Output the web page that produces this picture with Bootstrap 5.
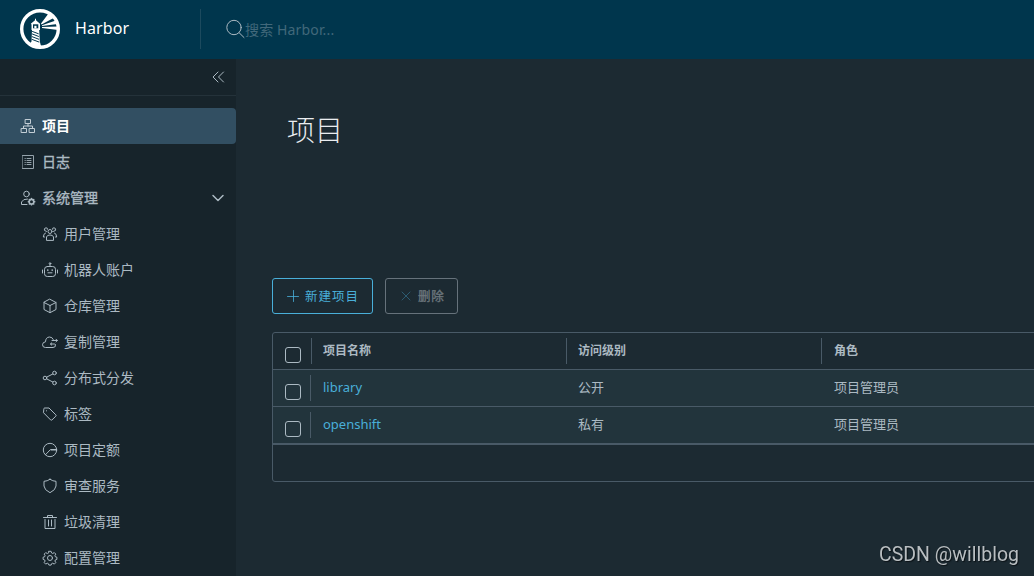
<!DOCTYPE html>
<html lang="zh-CN" data-bs-theme="dark">
<head>
<meta charset="utf-8">
<meta name="viewport" content="width=device-width, initial-scale=1">
<title>Harbor</title>
<link href="https://cdn.jsdelivr.net/npm/bootstrap@5.3.0/dist/css/bootstrap.min.css" rel="stylesheet">
<style>
  body { font-family: "Noto Sans", "Noto Sans CJK SC", sans-serif; font-size: 14px; line-height: 24px; background: #1c2a32; color: #acbac3; height: 100vh; overflow: hidden; }
  svg { display: block; flex: none; fill: none; stroke: currentColor; stroke-width: 1; stroke-linecap: round; stroke-linejoin: round; }
  .topbar { height: 59px; background: #00364d; padding: 0 0 2px 20px; }
  .brand-name { font-size: 16px; letter-spacing: .1px; color: #fff; margin: -2px 0 0 15px; width: 125px; }
  .search-box { height: 40px; border-left: 1px solid #1c4a5e; padding-left: 25px; color: #acbac3; }
  .search-box input { background: none; border: 0; outline: 0; padding: 0; width: 180px; font-size: 14px; letter-spacing: .15px; height: 24px; margin-top: 2px; }
  .search-box input::placeholder { color: #41687a; opacity: 1; }
  .side { width: 236px; background: #17242b; }
  .collapse-bar { height: 37px; border-bottom: 1px solid #24323a; padding-right: 11px; margin-bottom: 12px; }
  .side .nav-link { height: 36px; padding: 0 10px 0 20px; color: #acbac3; gap: 6px; border-radius: 0 4px 4px 0; font-size: 14px; white-space: nowrap; }
  .side .top-item { -webkit-text-stroke: .35px currentColor; }
  .side .nav-link.active { background: #324f62; color: #fff; font-weight: 700; -webkit-text-stroke: 0; }
  .side .active svg { color: #c3ced5; }
  .side .sub-item { padding-left: 42px; }
  .content-area { padding: 0 0 0 36px; min-width: 0; overflow: hidden; }
  .page-title { font-size: 28px; line-height: 36px; font-weight: 300; color: #eaedf0; margin: 53px 0 0 15px; }
  .action-row { margin-top: 130px; gap: 12px; }
  .action { height: 36px; padding: 0 12px 0 14px; border-radius: 3px; font-size: 12.5px; letter-spacing: 1px; line-height: 34px; display: flex; align-items: center; gap: 6px; white-space: nowrap; }
  .action span { padding-top: 2px; }
  .action-new, .action-new:hover { color: #49afd9; border-color: #49afd9; width: 101px; }
  .action-del:disabled { color: #6c767d; border-color: #66727b; opacity: 1; width: 73px; -webkit-text-stroke: .35px currentColor; letter-spacing: .8px; }
  .grid-box { width: 1100px; margin-top: 18px; border: 1px solid #495a67; border-radius: 3px; font-size: 13px; }
  .grid-line { height: 37px; border-bottom: 1px solid #495a67; }
  .grid-line > div { width: 255px; padding-left: 12px; line-height: 34px; }
  .grid-line > .pick { width: 38px; padding: 7px 0 0 12px; }
  .grid-line > div:last-child { padding-left: 13px; }
  .grid-line.head-line { font-size: 12px; font-weight: 700; }
  .grid-line.head-line > .ruled { line-height: 36px; }
  .ruled { background: linear-gradient(#495a67, #495a67) 0 5px / 1px 26px no-repeat; }
  .body-line { background-color: #22343c; }
  .grid-line.body-line > .ruled { margin-left: -1px; padding-left: 13px; width: 256px; }
  .body-line.last-line { border-bottom-width: 2px; height: 38px; }
  .grid-line a { color: #49afd9; text-decoration: none; }
  .form-check-input.pick-box { width: 16px; height: 16px; margin: 7px 0 0; display: block; float: none; background: none; border: 1px solid #acbac3; border-radius: 3px; }
  .grid-foot { height: 36px; }
  .watermark { position: fixed; right: 15px; bottom: 9px; font: 19.5px/24px Roboto, sans-serif; color: #b9bec1; text-shadow: 1px 1px 1px #0b1216; }
</style>
</head>
<body class="d-flex flex-column">
<header class="topbar d-flex align-items-center flex-shrink-0">
  <svg width="40" height="40" viewBox="0 0 40 40" stroke="none">
    <circle cx="20" cy="20" r="18.3" stroke="#fff" stroke-width="3.4"/>
    <path fill="#fff" stroke="none" d="M10.800 14.800L15 11.200V9.800H16V11.200L20 14.800V21H19.200L19.800 32.500Q20.500 36 22 39Q14 39 9.500 35L11.500 32.500L12 21H11.500V15.500Z"/>
    <path fill="#00364d" stroke="none" d="M13 15.300h5.300v4h-5.300z"/><path fill="#fff" stroke="none" d="M14.300 16.800h2.200v2.500h-2.200z"/>
    <path stroke="#00364d" stroke-width="1" d="M12.500 22.500l5.800 2.200M12.300 25l6.200 2.400M12.200 27.700l6.500 2.500M12 30.400l6.900 2.600"/>
    <path fill="#fff" stroke="none" d="M21 14.400L28.500 4.500L34.500 8.500L21.500 15.500ZM22 16.300L36.500 11.300L37.500 15L22 17.100ZM22 18L38 17.600V21L22 19Z"/>
  </svg>
  <div class="brand-name">Harbor</div>
  <div class="search-box d-flex align-items-center">
    <svg width="19" height="20" viewBox="0 0 19 20" stroke-width="1.2"><circle cx="8" cy="8.500" r="7.2"/><path d="M13.200 13.800L18 18.500"/></svg>
    <input type="text" placeholder="搜索 Harbor..." aria-label="搜索">
  </div>
</header>
<div class="d-flex flex-grow-1 overflow-hidden">
  <nav class="side flex-shrink-0">
    <div class="collapse-bar d-flex justify-content-end align-items-center">
      <svg width="14" height="12" viewBox="0 0 14 12"><path d="M7 1L2 6L7 11M12.500 1L7.500 6L12.500 11"/></svg>
    </div>
    <div class="nav flex-column flex-nowrap">
      <a class="nav-link top-item active d-flex align-items-center" href="#"><svg width="16" height="16" viewBox="0 0 16 16"><path d="M5.5 1.5h5v4h-5zM1.500 10.500h5v4h-5zM9.500 10.500h5v4h-5zM8 5.500v2.500M3.500 10.500V8h9v2.500"/></svg>项目</a>
      <a class="nav-link top-item d-flex align-items-center" href="#"><svg width="16" height="16" viewBox="0 0 16 16" opacity=".85"><path d="M2.500 1.500h11v13h-11zM5 4.500h.3M5 6.500h.3M5 8.500h.3M5 10.500h.3M7 4.500h4M7 6.500h4M7 8.500h4M7 10.500h4"/></svg>日志</a>
      <a class="nav-link top-item d-flex align-items-center" href="#"><svg width="16" height="16" viewBox="0 0 16 16"><circle cx="6.500" cy="4" r="2.800"/><path d="M7 14.500H1.500V12Q3 8.800 7.500 9"/><circle cx="11.500" cy="11.700" r="2.300" stroke-width="1.600"/><path stroke-width="1.400" d="M11.500 8.500v.3M11.500 14.600v.3M8.300 11.700h.3M14.500 11.700h.3M9.300 9.500l.2.200M13.600 13.800l.2.200M13.600 9.600l.2-.2M9.300 13.900l.2-.2"/></svg>系统管理
        <svg class="ms-auto" width="16" height="16" viewBox="0 0 16 16"><path stroke-width="1.500" d="M3 5.500L8 10.500L13 5.500"/></svg></a>
      <a class="nav-link sub-item d-flex align-items-center" href="#"><svg width="16" height="16" viewBox="0 0 16 16"><circle cx="8" cy="5.500" r="2"/><path d="M4.500 14V11Q5 9 8 9T11.500 11V14ZM2.500 4Q2 1.800 4 1.800T5.500 3.300M13.500 4Q14 1.800 12 1.800T10.500 3.300M2.500 4Q3 5.500 4.500 5.500M13.500 4Q13 5.500 11.500 5.500M3.500 7Q1.500 7.500 1.300 11H2.500M12.500 7Q14.500 7.500 14.700 11H13.500"/></svg>用户管理</a>
      <a class="nav-link sub-item d-flex align-items-center" href="#"><svg width="16" height="16" viewBox="0 0 16 16"><rect x="2.500" y="4.500" width="11" height="10" rx="2.800"/><path d="M8 4.500V2.500M6 10.800h4M.5 8v3M15.500 8v3"/><circle cx="8" cy="1.500" r=".8"/><path stroke-width="1.600" d="M5.800 8v.2M10.200 8v.2"/></svg>机器人账户</a>
      <a class="nav-link sub-item d-flex align-items-center" href="#"><svg width="16" height="16" viewBox="0 0 16 16"><path d="M8 1.300L14 4.500V11.500L8 14.700L2 11.500V4.500ZM2 4.500L8 7.500L14 4.500M8 7.500V14.700"/></svg>仓库管理</a>
      <a class="nav-link sub-item d-flex align-items-center" href="#"><svg width="16" height="16" viewBox="0 0 16 16"><path d="M13.500 10.500Q14.200 13.500 11 13.500H3.500Q.5 13.500 .5 10.700Q.7 8 3.500 7.800Q3.700 3.200 7.500 3Q10.300 3 11.300 5.500M10 6.500H15.300M14 5.200l1.300 1.300L14 7.800M8.500 10h4M9.800 8.800L8.500 10l1.300 1.200"/></svg>复制管理</a>
      <a class="nav-link sub-item d-flex align-items-center" href="#"><svg width="16" height="16" viewBox="0 0 16 16"><circle cx="3" cy="8" r="1.800"/><circle cx="12.500" cy="3" r="1.800"/><circle cx="12.500" cy="13" r="1.800"/><path d="M4.700 7.100L10.800 4M4.700 8.900L10.800 12"/></svg>分布式分发</a>
      <a class="nav-link sub-item d-flex align-items-center" href="#"><svg width="16" height="16" viewBox="0 0 16 16"><path d="M1.800 2.800Q1.800 2 2.600 2H7L13.800 8.800Q14.500 9.500 13.800 10.200L10 13.900Q9.300 14.500 8.600 13.900L1.800 7ZM4.500 4.800h.1"/></svg>标签</a>
      <a class="nav-link sub-item d-flex align-items-center" href="#"><svg width="16" height="16" viewBox="0 0 16 16"><circle cx="8" cy="8" r="6.700"/><path d="M14.500 7.500H8.500L3.500 12.700"/><path opacity=".5" d="M9 8.500h5.500"/></svg>项目定额</a>
      <a class="nav-link sub-item d-flex align-items-center" href="#"><svg width="16" height="16" viewBox="0 0 16 16"><path d="M8 1.300Q10.800 3.300 14 3.300V8Q13.700 12 8 14.700Q2.300 12 2 8V3.300Q5.200 3.300 8 1.300Z"/></svg>审查服务</a>
      <a class="nav-link sub-item d-flex align-items-center" href="#"><svg width="16" height="16" viewBox="0 0 16 16"><path d="M1.500 3.500h13M5.500 3.500v-2h5v2M3 5.500v9h10v-9M6.500 6v6M9.500 6v6"/></svg>垃圾清理</a>
      <a class="nav-link sub-item d-flex align-items-center" href="#"><svg width="16" height="16" viewBox="0 0 16 16"><circle cx="8" cy="8" r="2.500"/><path d="M6.900 1.300h2.200l.5 1.700 1.100.5 1.600-.9 1.500 1.500-.9 1.600.5 1.100 1.500.4v2.200l-1.500.5-.5 1.100.9 1.600-1.500 1.500-1.600-.9-1.100.5-.5 1.400H6.900l-.5-1.400-1.100-.5-1.600.9-1.500-1.500.9-1.600-.5-1.100-1.500-.5V7.200l1.500-.4.5-1.100-.9-1.600 1.500-1.500 1.600.9 1.100-.5Z"/></svg>配置管理</a>
    </div>
  </nav>
  <main class="content-area flex-grow-1">
    <h1 class="page-title">项目</h1>
    <div class="action-row d-flex">
      <button class="btn action action-new"><svg width="12" height="12" viewBox="0 0 12 12"><path opacity=".8" d="M6.500 .5v11M.5 6.500h11"/></svg><span>新建项目</span></button>
      <button class="btn action action-del" disabled><svg width="12" height="12" viewBox="0 0 12 12" color="#2c5b71"><path d="M2 2l8 8M10 2l-8 8"/></svg><span>删除</span></button>
    </div>
    <div class="grid-box">
      <div class="grid-line head-line d-flex"><div class="pick"><input class="form-check-input pick-box" type="checkbox" aria-label="全选"></div><div class="ruled">项目名称</div><div class="ruled">访问级别</div><div class="ruled">角色</div></div>
      <div class="grid-line body-line d-flex"><div class="pick"><input class="form-check-input pick-box" type="checkbox" aria-label="library"></div><div class="ruled"><a href="#">library</a></div><div>公开</div><div>项目管理员</div></div>
      <div class="grid-line body-line last-line d-flex"><div class="pick"><input class="form-check-input pick-box" type="checkbox" aria-label="openshift"></div><div class="ruled"><a href="#">openshift</a></div><div>私有</div><div>项目管理员</div></div>
      <div class="grid-foot"></div>
    </div>
  </main>
</div>
<div class="watermark">CSDN @willblog</div>
<script src="https://cdn.jsdelivr.net/npm/bootstrap@5.3.0/dist/js/bootstrap.bundle.min.js"></script>
</body>
</html>
